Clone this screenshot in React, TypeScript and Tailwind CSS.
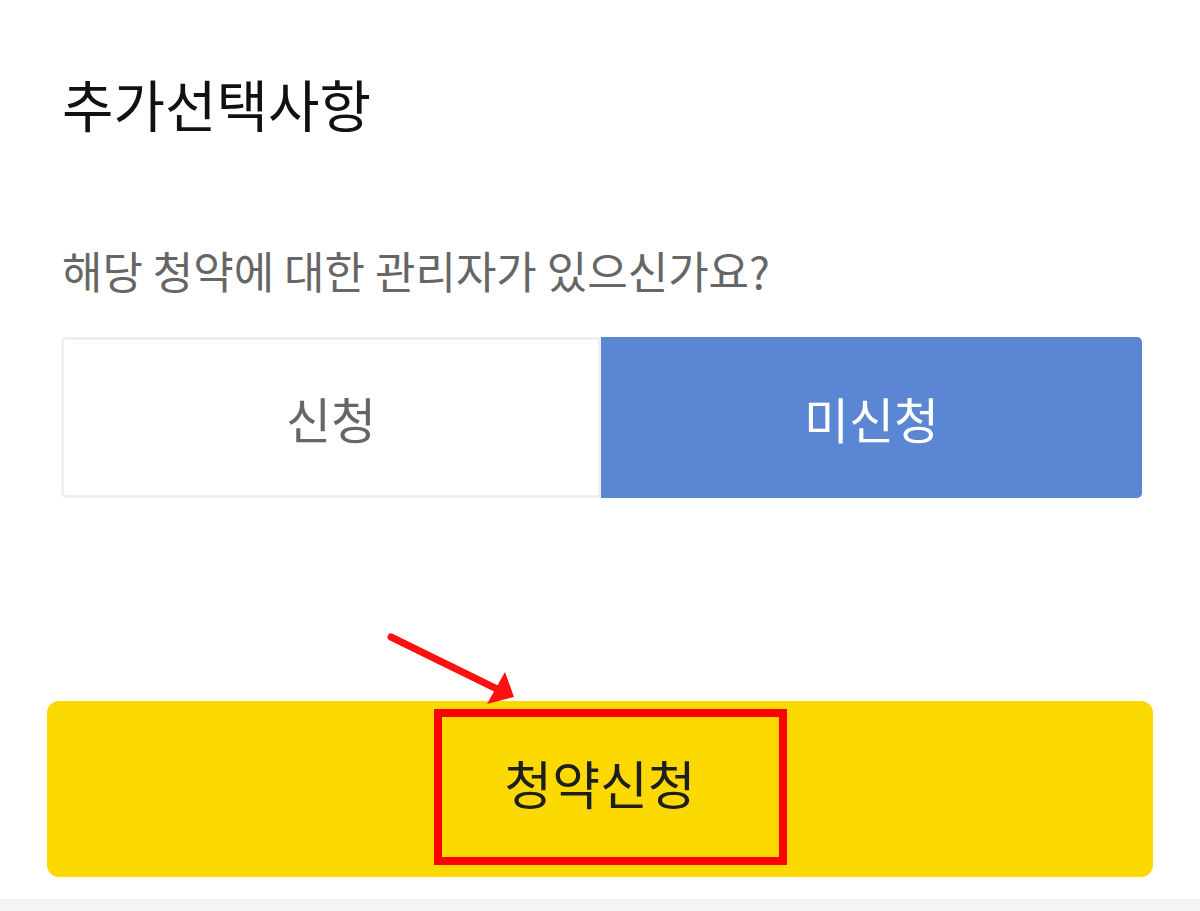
import React from "react";

function Arrow() {
  return (
    <svg
      className="absolute left-0 top-0 pointer-events-none"
      width={1200}
      height={911}
      viewBox="0 0 1200 911"
    >
      <line x1={391} y1={637} x2={497} y2={689} stroke="#ff1010" strokeWidth={7} strokeLinecap="round" />
      <polygon points="505,672 514,697 487,704" fill="#ff1010" />
    </svg>
  );
}

export default function App() {
  return (
    <div className="relative w-[1200px] h-[911px] bg-white flex flex-col font-['Noto_Sans_CJK_KR','Noto_Sans',sans-serif]">
      <h1 className="pl-[62px] pt-[70px] text-[56px] leading-[66px] text-[#111] font-normal">
        추가선택사항
      </h1>

      <p className="pl-[62px] mt-[107px] text-[44px] leading-[54px] text-[#666]">
        해당 청약에 대한 관리자가 있으신가요?
      </p>

      <div className="ml-[61px] mt-[40px] w-[1081px] h-[161px] flex">
        <button className="flex-1 flex items-center justify-center border-[3px] border-[#efefef] rounded-l-[5px] bg-white text-[49px] text-[#666]">
          신청
        </button>
        <button className="w-[541px] flex items-center justify-center bg-[#5b86d3] rounded-r-[5px] text-[49px] text-white">
          미신청
        </button>
      </div>

      <div className="relative mx-[47px] mt-[203px] h-[176px] rounded-[12px] bg-[#fcd900] flex items-center justify-center">
        <span className="text-[52px] leading-[60px] text-[#1e1e1e] font-normal -mt-[12px]">청약신청</span>
        <div className="absolute left-[387px] top-[8px] w-[353px] h-[156px] border-[8px] border-[#ff0000]" />
      </div>

      <div className="mt-[22px] flex-1 bg-[#f4f4f4]" />

      <Arrow />
    </div>
  );
}
